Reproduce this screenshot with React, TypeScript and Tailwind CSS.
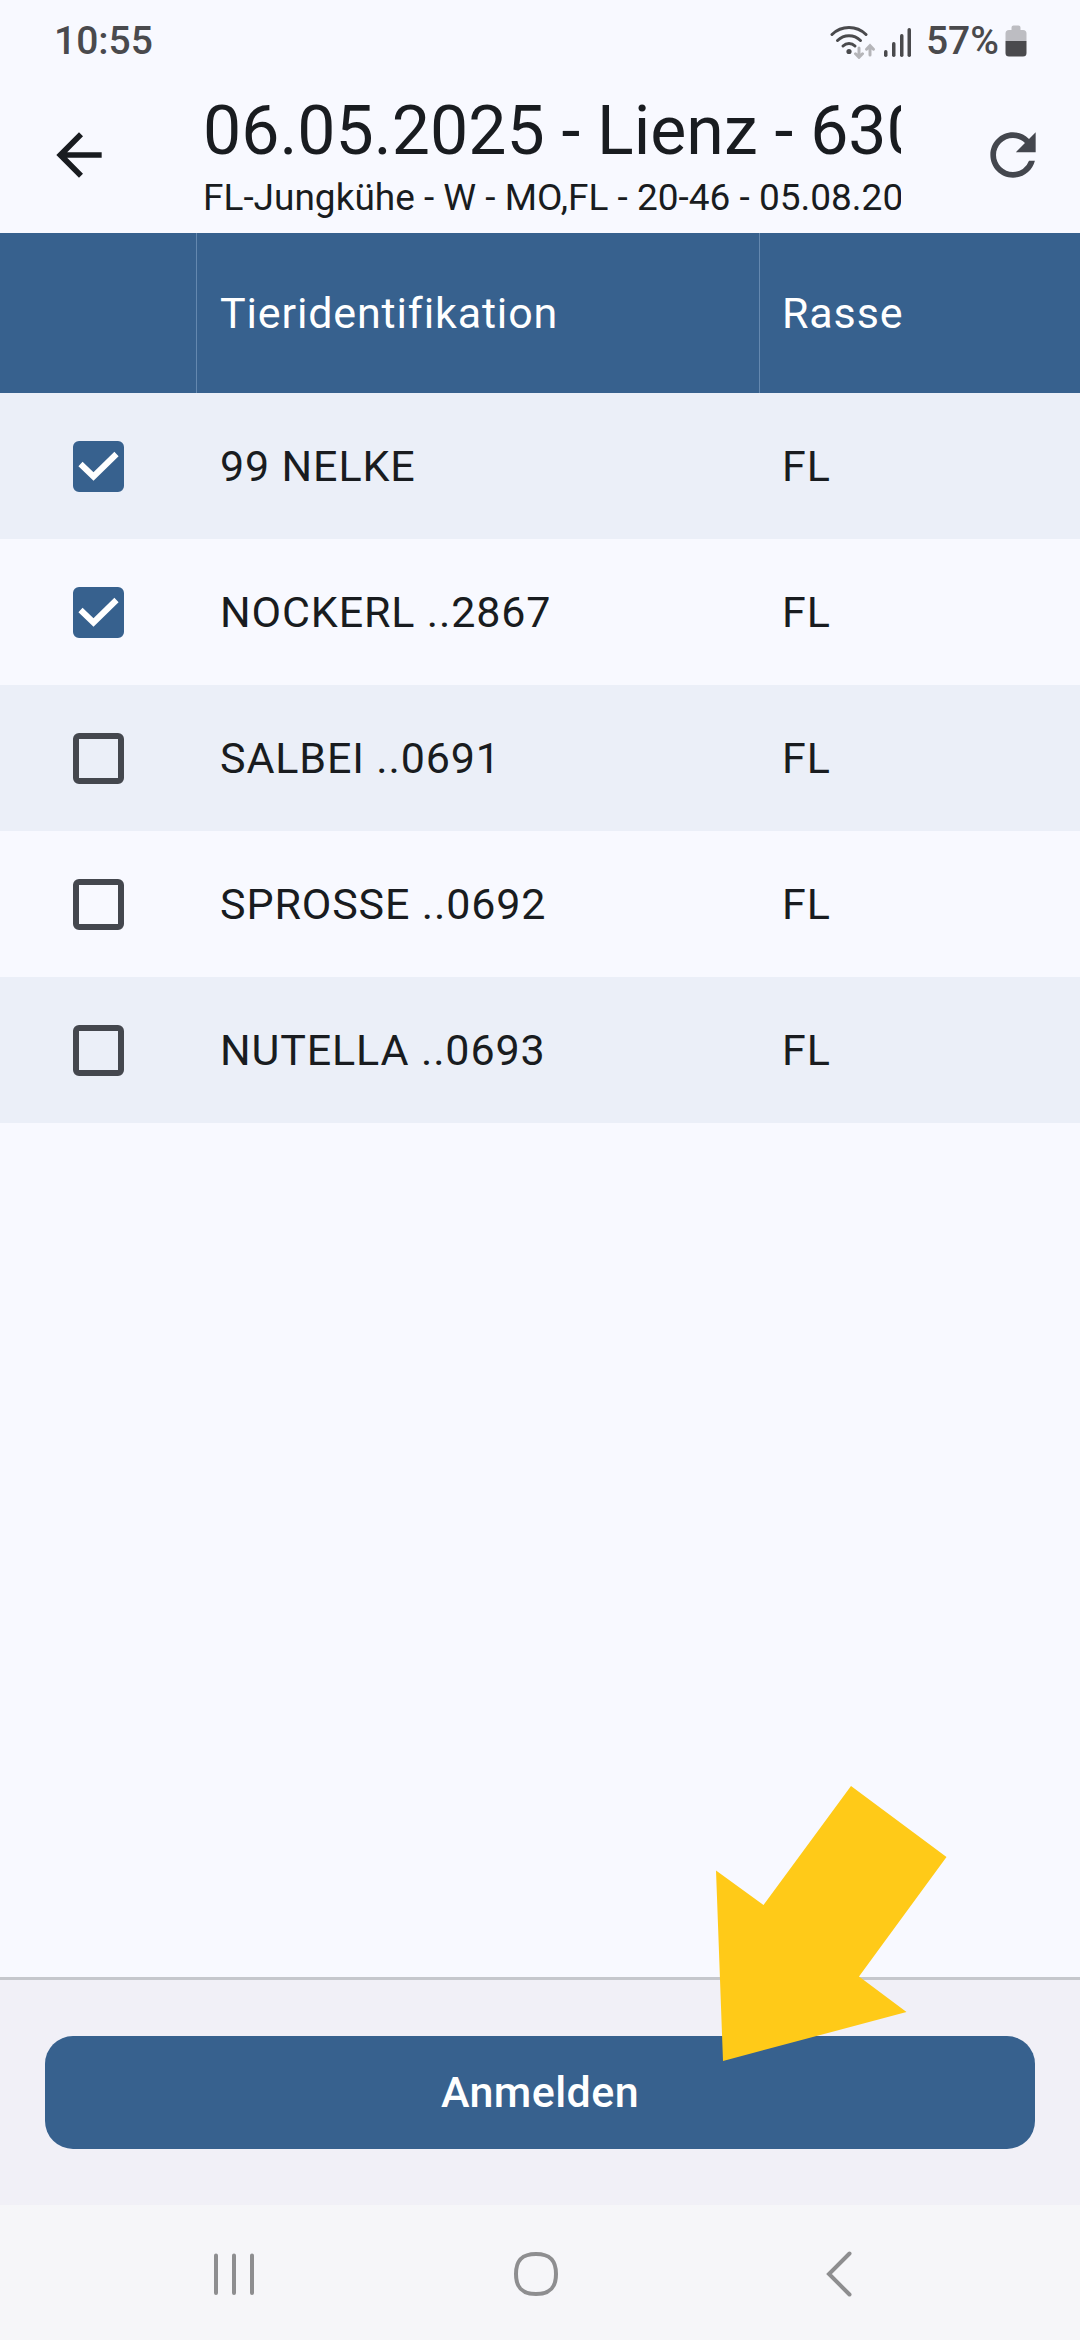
import { useState } from "react";
import { MdArrowBack, MdRefresh } from "react-icons/md";

type Animal = { id: string; name: string; breed: string };

const animals: Animal[] = [
  { id: "nelke", name: "99 NELKE", breed: "FL" },
  { id: "nockerl", name: "NOCKERL ..2867", breed: "FL" },
  { id: "salbei", name: "SALBEI ..0691", breed: "FL" },
  { id: "sprosse", name: "SPROSSE ..0692", breed: "FL" },
  { id: "nutella", name: "NUTELLA ..0693", breed: "FL" },
];

function StatusBar() {
  return (
    <div className="flex h-[76px] items-center justify-between pt-1.5 pr-[53px] pl-[54px] text-[39px] leading-[44px] font-medium text-[#4a4a4d]">
      <span>10:55</span>
      <div className="flex items-center">
        <svg width="46" height="36" viewBox="0 0 46 36" fill="none" strokeLinecap="round" aria-hidden="true">
          <g stroke="#4a4a4d" strokeWidth="3">
            <path d="M2 11.5C11.500 2.200 26.500 2.200 36 11.500" />
            <path d="M7.500 17.500C14 11.200 24 11.200 30.500 17.500" />
            <path d="M13 23C16.500 19.600 21.500 19.600 25 23" />
          </g>
          <circle cx="19" cy="28.500" r="2.600" fill="#4a4a4d" />
          <g stroke="#b5b5b9" strokeWidth="3">
            <path d="M29 25V34M25.500 30.800L29 34.300L32.500 30.800" />
            <path d="M40 32V23M36.500 26.200L40 22.700L43.500 26.200" />
          </g>
        </svg>
        <svg className="ml-2" width="28" height="36" viewBox="0 0 28 36" fill="#4a4a4d" aria-hidden="true">
          <rect x="0" y="27" width="3.500" height="7" rx="1.700" />
          <rect x="8" y="19" width="3.500" height="15" rx="1.700" />
          <rect x="16" y="11" width="3.500" height="23" rx="1.700" />
          <rect x="23.500" y="5" width="3.500" height="29" rx="1.700" />
        </svg>
        <span className="ml-3.5">57%</span>
        <svg className="ml-1.5" width="22" height="36" viewBox="0 0 22 36" aria-hidden="true">
          <path d="M6.500 4.500q0-2 2-2h5q2 0 2 2V7H18q3.500 0 3.500 3.500V18H.500V10.500Q.500 7 4 7h2.500z" fill="#bdbdc2" />
          <path d="M.500 18h21v12q0 3.500-3.500 3.500H4Q.500 33.500.500 30z" fill="#4a4a4d" />
        </svg>
      </div>
    </div>
  );
}

function AppBar() {
  return (
    <header className="flex h-[157px] items-center pr-[33px] pl-[45px]">
      <button type="button" aria-label="Zurück" className="shrink-0 text-[#191c20]">
        <MdArrowBack className="size-[68px]" />
      </button>
      <div className="mr-[78px] ml-[90px] min-w-0 flex-1 overflow-hidden whitespace-nowrap text-[#191c20]">
        <h1 className="text-[68px] leading-[86px]">06.05.2025 - Lienz - 630</h1>
        <p className="text-[37px] leading-[48px]">FL-Jungkühe - W - MO,FL - 20-46 - 05.08.20</p>
      </div>
      <button type="button" aria-label="Aktualisieren" className="shrink-0 text-[#44474e]">
        <MdRefresh className="size-[68px]" />
      </button>
    </header>
  );
}

function NavigationBar() {
  return (
    <nav className="grid h-[135px] grid-cols-3 items-center justify-items-center bg-[#f6f6f9] pt-0.5 pr-[90px] pl-[83px]">
      <button type="button" aria-label="Letzte Apps">
        <svg width="48" height="48" viewBox="0 0 48 48" stroke="#8e8e90" strokeWidth="4" strokeLinecap="round">
          <path d="M6 5.500V43M24 5.500V43M42 5.500V43" />
        </svg>
      </button>
      <button type="button" aria-label="Startseite">
        <svg width="48" height="48" viewBox="0 0 48 48" fill="none" stroke="#8e8e90" strokeWidth="4">
          <path d="M24 4C38 4 44 10 44 24S38 44 24 44S4 38 4 24S10 4 24 4Z" />
        </svg>
      </button>
      <button type="button" aria-label="Zurück">
        <svg width="48" height="48" viewBox="0 0 48 48" fill="none" stroke="#8e8e90" strokeWidth="4" strokeLinecap="round">
          <path d="M34.500 3.500L14 24L34.500 44.500" />
        </svg>
      </button>
    </nav>
  );
}

export default function App() {
  const [selected, setSelected] = useState<string[]>(["nelke", "nockerl"]);

  const toggle = (id: string) =>
    setSelected((prev) => (prev.includes(id) ? prev.filter((x) => x !== id) : [...prev, id]));

  return (
    <div className="flex min-h-screen flex-col bg-[#f8f9ff] font-[Roboto,sans-serif]">
      <StatusBar />
      <AppBar />

      <main className="flex-1">
        <table className="w-full table-fixed border-separate border-spacing-0 text-left text-[43px] leading-[50px] tracking-[0.02em] text-[#191c20]">
          <thead>
            <tr className="h-[160px] bg-[#37618e] text-white">
              <td className="w-[197px] border-r border-[#6488af]" />
              <th scope="col" className="w-[563px] border-r border-[#6488af] px-[23px] font-normal">
                Tieridentifikation
              </th>
              <th scope="col" className="px-[22px] font-normal">
                Rasse
              </th>
            </tr>
          </thead>
          <tbody>
            {animals.map((animal) => (
              <tr key={animal.id} className="h-[146px] odd:bg-[#ebeff8]">
                <td>
                  <div className="grid place-items-center">
                    <input
                      id={animal.id}
                      type="checkbox"
                      checked={selected.includes(animal.id)}
                      onChange={() => toggle(animal.id)}
                      className="peer col-start-1 row-start-1 size-[51px] appearance-none rounded-[6px] border-[6px] border-[#44474e] checked:border-[#37618e] checked:bg-[#37618e]"
                    />
                    <svg
                      className="pointer-events-none invisible col-start-1 row-start-1 peer-checked:visible"
                      width="51"
                      height="51"
                      viewBox="0 0 51 51"
                      fill="none"
                      stroke="#fff"
                      strokeWidth="6"
                      aria-hidden="true"
                    >
                      <path d="M7.500 23L20.500 35.500L43.500 13" />
                    </svg>
                  </div>
                </td>
                <td className="px-[23px]">
                  <label htmlFor={animal.id}>{animal.name}</label>
                </td>
                <td className="px-[22px]">{animal.breed}</td>
              </tr>
            ))}
          </tbody>
        </table>
      </main>

      <footer className="relative border-t-[3px] border-[#c5c7cc] bg-[#f1f0f7] px-[45px] py-14">
        <button
          type="button"
          className="h-[113px] w-full rounded-[28px] bg-[#37618e] text-[43px] font-medium tracking-[0.01em] text-white"
        >
          Anmelden
        </button>
        {/* Pointer to the submit button */}
        <svg
          className="pointer-events-none absolute -top-[194px] right-[133px]"
          width="231"
          height="275"
          viewBox="0 0 231 275"
          fill="#ffca18"
          aria-hidden="true"
        >
          <path d="M135 0L230.500 71L143 190.500L190.500 226L7 275L0 84.500L47.500 119Z" />
        </svg>
      </footer>

      <NavigationBar />
    </div>
  );
}
